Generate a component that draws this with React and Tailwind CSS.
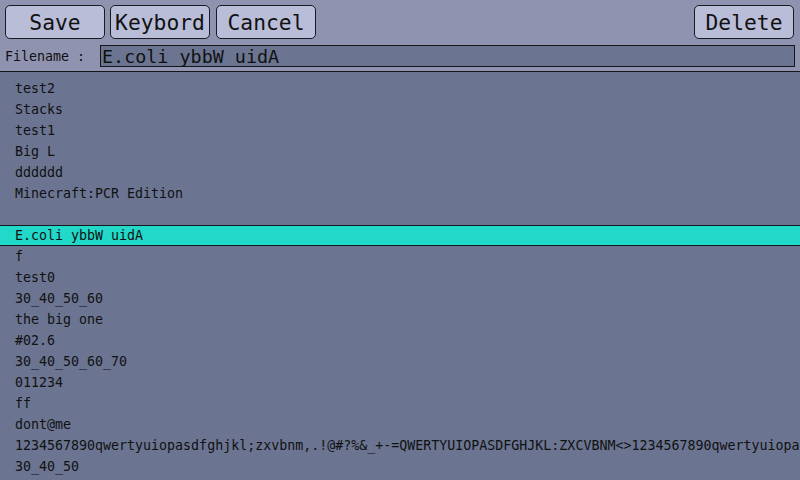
export default function App() {
  const items = [
    "test2",
    "Stacks",
    "test1",
    "Big L",
    "dddddd",
    "Minecraft:PCR Edition",
    "",
    "E.coli ybbW uidA",
    "f",
    "test0",
    "30_40_50_60",
    "the big one",
    "#02.6",
    "30_40_50_60_70",
    "011234",
    "ff",
    "dont@me",
    "1234567890qwertyuiopasdfghjkl;zxvbnm,.!@#?%&_+-=QWERTYUIOPASDFGHJKL:ZXCVBNM<>1234567890qwertyuiopasdfghjkl",
    "30_40_50",
  ];
  const btn =
    "h-[34px] w-[100px] rounded-[5px] border border-[#1a1a22] bg-[#b9bdd8] text-[21.3px] leading-none text-[#111] flex items-center justify-center pt-[2px]";
  return (
    <div
      className="w-[800px] h-[480px] overflow-hidden bg-[#6b7591] flex flex-col"
      style={{ fontFamily: '"DejaVu Sans Mono", monospace' }}
    >
      <div className="h-[72px] bg-[#8f93b0] border-b border-[#15151c] flex flex-col px-[5px] pt-[5px] shrink-0">
        <div className="flex items-center">
          <div className={btn}>Save</div>
          <div className={btn + " ml-[5px] w-[99px]"}>Keybord</div>
          <div className={btn + " ml-[6px]"}>Cancel</div>
          <div className="flex-1" />
          <div className={btn + " w-[99px] mr-[1px]"}>Delete</div>
        </div>
        <div className="flex items-center mt-[6px] h-[22px]">
          <div className="w-[95px] text-[13.3px] text-[#111] pt-[1px]">Filename :</div>
          <div className="flex-1 h-[22px] border border-[#15151c] bg-[#6b7591] flex items-center pl-[1px] pt-[2px] text-[18.4px] leading-none text-[#111]">
            E.coli ybbW uidA
          </div>
        </div>
      </div>
      <div className="flex flex-col pt-[6px]">
        {items.map((t, i) =>
          i === 7 ? (
            <div
              key={i}
              className="h-[21px] border-y border-[#15151c] bg-[#22d8c8] flex items-center pl-[15px] text-[13.3px] text-[#111] whitespace-nowrap"
            >
              {t}
            </div>
          ) : (
            <div
              key={i}
              className="h-[21px] flex items-center pl-[15px] pt-[1px] text-[13.3px] text-[#111] whitespace-nowrap"
            >
              {t}
            </div>
          )
        )}
      </div>
    </div>
  );
}
